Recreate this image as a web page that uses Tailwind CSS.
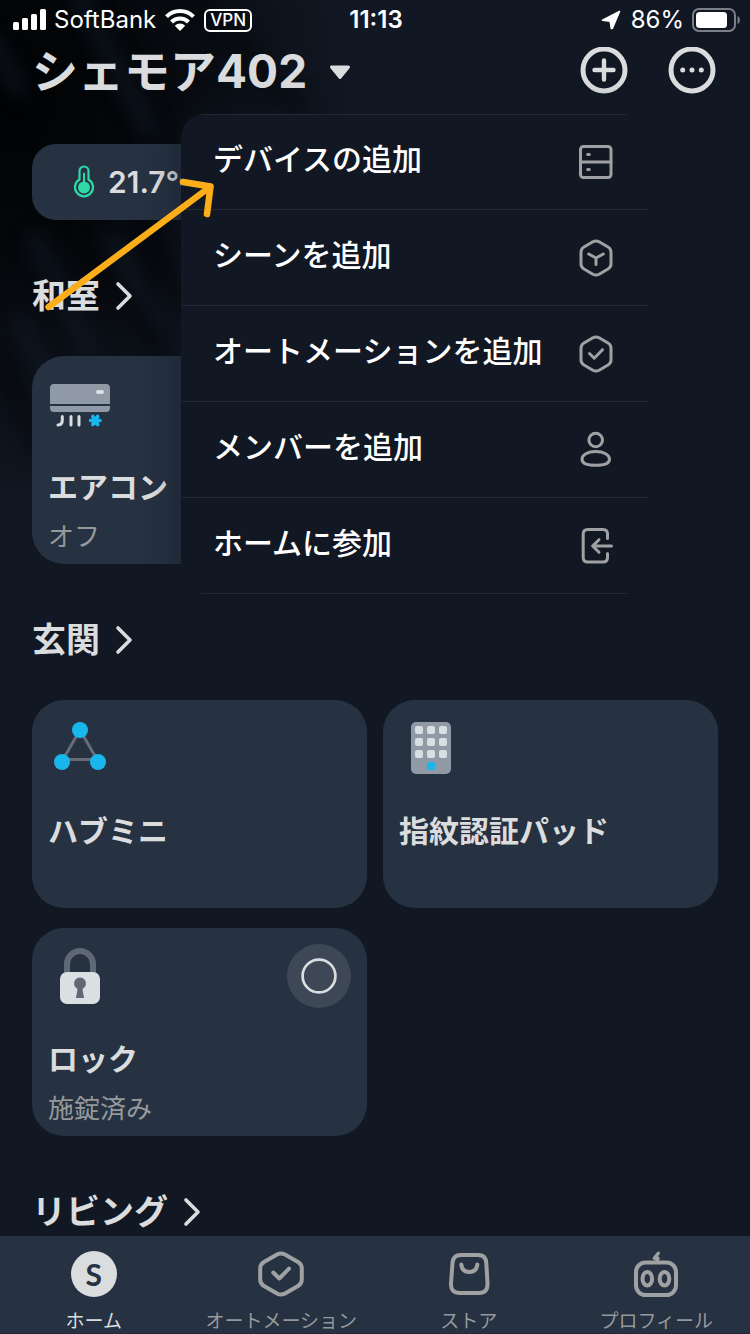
<!DOCTYPE html>
<html lang="ja">
<head>
<meta charset="utf-8">
<meta name="viewport" content="width=device-width, initial-scale=1">
<title>シェモア402</title>
<script src="https://cdn.jsdelivr.net/npm/@tailwindcss/browser@4"></script>
</head>
<body class="bg-[#111823] text-[#dadcde] font-['Inter','Noto_Sans_CJK_JP',sans-serif]">
<div class="relative isolate flex h-screen flex-col overflow-hidden">

  <!-- Shaded backdrop -->
  <svg class="absolute left-0 top-0 -z-10" width="600" height="560" viewBox="0 0 600 560" aria-hidden="true">
    <defs>
      <radialGradient id="shade" gradientUnits="userSpaceOnUse" cx="0" cy="0" r="1" gradientTransform="translate(10 100) scale(340 410)">
        <stop offset="0" stop-color="#010203"/>
        <stop offset="0.35" stop-color="#010203" stop-opacity="0.8"/>
        <stop offset="1" stop-color="#010203" stop-opacity="0"/>
      </radialGradient>
      <filter id="soft" filterUnits="userSpaceOnUse" x="-100" y="-100" width="800" height="760" color-interpolation-filters="sRGB"><feGaussianBlur stdDeviation="9"/></filter>
    </defs>
    <rect width="600" height="560" fill="url(#shade)"/>
    <g filter="url(#soft)" fill="none" stroke-linecap="round" stroke-width="16">
      <path stroke="#111a27" stroke-opacity="0.7" d="M-10 40 L20 90 M80 0 L150 130 M35 240 L90 350 M20 320 L60 400 M110 240 L160 330"/>
      <path stroke="#010203" stroke-opacity="0.5" d="M190 0 L300 110 M70 225 L160 345 M140 230 L200 330 M0 360 L40 450"/>
    </g>
  </svg>

  <!-- Status bar -->
  <div class="grid h-10 shrink-0 grid-cols-[1fr_auto_1fr] items-center pl-3 pr-2.5 text-[24px] leading-7 text-white">
    <div class="flex items-center">
      <svg width="36" height="24" viewBox="0 0 36 24" fill="#fff" aria-hidden="true"><rect x="1" y="14" width="6" height="8" rx="1.500"/><rect x="10" y="10" width="6" height="12" rx="1.500"/><rect x="19" y="6" width="6" height="16" rx="1.500"/><rect x="28" y="1" width="6" height="21" rx="1.500"/></svg>
      <span class="ml-1.5">SoftBank</span>
      <svg class="ml-2" width="32" height="24" viewBox="0 0 32 24" aria-hidden="true"><g fill="none" stroke="#fff" stroke-width="4"><path d="M2.500 8.600 A19 19 0 0 1 29.500 8.600"/><path d="M7.500 14 A12 12 0 0 1 24.500 14"/></g><path fill="#fff" d="M16 23 L10.800 17.700 A7.400 7.400 0 0 1 21.200 17.700Z"/></svg>
      <span class="ml-2 flex h-[23px] items-center rounded-md border-2 border-white px-1 text-[17px] leading-4 font-medium">VPN</span>
    </div>
    <div class="font-semibold">11:13</div>
    <div class="flex items-center justify-end">
      <svg width="20" height="20" viewBox="0 0 20 20" aria-hidden="true"><path fill="#fff" stroke="#fff" stroke-width="1.600" stroke-linejoin="round" d="M18.500 1.500 L1.500 10.300 L9.200 11.200 L10.300 18.500 L11.300 18.500Z"/></svg>
      <span class="ml-2.5">86%</span>
      <svg class="ml-2" width="48" height="24" viewBox="0 0 48 24" aria-hidden="true"><rect x="1" y="1" width="42" height="22" rx="6" fill="none" stroke="#7c8086" stroke-width="2"/><rect x="4" y="4" width="31" height="16" rx="3.500" fill="#fff"/><path fill="#7c8086" d="M45.500 8 Q48 9 48 12 T45.500 16Z"/></svg>
    </div>
  </div>

  <!-- Header -->
  <header class="relative z-10 flex h-[62px] shrink-0 items-center justify-between pl-8 pr-[34px]">
    <button type="button" class="flex items-center gap-[22px]">
      <h1 class="text-[46px] leading-[62px] font-bold">シェモア402</h1>
      <svg width="22" height="20" viewBox="0 0 22 20" aria-hidden="true"><path fill="#dadcde" stroke="#dadcde" stroke-width="3" stroke-linejoin="round" d="M2.500 6 H19.500 L11 16.500Z"/></svg>
    </button>
    <div class="flex gap-10">
      <button type="button" aria-label="追加"><svg width="48" height="48" viewBox="0 0 48 48" fill="none" stroke="#dadcde" aria-hidden="true"><circle cx="24" cy="23" r="21" stroke-width="5"/><path d="M14.500 23 H33.500 M24 13.500 V32.500" stroke-width="4.400" stroke-linecap="round"/></svg></button>
      <button type="button" aria-label="その他"><svg width="48" height="48" viewBox="0 0 48 48" fill="#dadcde" aria-hidden="true"><circle cx="24" cy="23" r="21" fill="none" stroke="#dadcde" stroke-width="5"/><circle cx="14.700" cy="23" r="2.500"/><circle cx="24" cy="23" r="2.500"/><circle cx="33.300" cy="23" r="2.500"/></svg></button>
    </div>

    <!-- Add menu -->
    <div role="menu" class="absolute right-[102px] top-[74px] w-[467px] overflow-hidden rounded-3xl bg-[#111823] text-[30px] leading-[34px] font-medium text-white shadow-[0_0_32px_rgba(17,24,35,0.6)]">
      <button type="button" role="menuitem" class="flex h-24 w-full items-start justify-between border-y border-[#212934] px-8 pt-[27px]">
        <span>デバイスの追加</span>
        <svg width="40" height="40" viewBox="0 0 40 40" fill="none" stroke="#9fa1a3" stroke-width="3" stroke-linecap="round" aria-hidden="true"><rect x="4.500" y="4.500" width="30.500" height="31" rx="3"/><path d="M4.500 20 H35 M11.700 12.500 H13.300 M11.700 27.500 H13.300"/></svg>
      </button>
      <button type="button" role="menuitem" class="flex h-24 w-full items-start justify-between border-b border-[#212934] px-8 pt-7">
        <span>シーンを追加</span>
        <svg width="40" height="40" viewBox="0 0 40 40" fill="none" stroke="#9fa1a3" stroke-width="3" stroke-linecap="round" stroke-linejoin="round" aria-hidden="true"><path d="M16.900 3.800 Q20 2.100 23.100 3.800 L32 9 Q35 10.800 35 14 V26 Q35 29.200 32 31 L23.100 36.200 Q20 37.900 16.900 36.200 L8 31 Q5 29.200 5 26 V14 Q5 10.800 8 9Z"/><path d="M12.700 16 L20 20 L27.300 16 M20 20 V26.500"/></svg>
      </button>
      <button type="button" role="menuitem" class="flex h-24 w-full items-start justify-between border-b border-[#212934] px-8 pt-7">
        <span>オートメーションを追加</span>
        <svg width="40" height="40" viewBox="0 0 40 40" fill="none" stroke="#9fa1a3" stroke-width="3" stroke-linecap="round" stroke-linejoin="round" aria-hidden="true"><path d="M16.900 3.800 Q20 2.100 23.100 3.800 L32 9 Q35 10.800 35 14 V26 Q35 29.200 32 31 L23.100 36.200 Q20 37.900 16.900 36.200 L8 31 Q5 29.200 5 26 V14 Q5 10.800 8 9Z"/><path d="M13.500 19.500 L18.200 24.200 L26.500 15.700"/></svg>
      </button>
      <button type="button" role="menuitem" class="flex h-24 w-full items-start justify-between border-b border-[#212934] px-8 pt-7">
        <span>メンバーを追加</span>
        <svg width="40" height="40" viewBox="0 0 40 40" fill="none" stroke="#9fa1a3" stroke-width="3" aria-hidden="true"><circle cx="19.700" cy="10" r="6.800"/><path d="M19.700 21.500 C28 21.500 33.500 25 33.500 29.200 C33.500 33.600 29 35.300 19.700 35.300 S6 33.600 6 29.200 C6 25 11.500 21.500 19.700 21.500Z"/></svg>
      </button>
      <button type="button" role="menuitem" class="flex h-24 w-full items-start justify-between border-b border-[#212934] px-8 pt-7">
        <span>ホームに参加</span>
        <svg width="40" height="40" viewBox="0 0 40 40" fill="none" stroke="#9fa1a3" stroke-width="3" stroke-linecap="round" stroke-linejoin="round" aria-hidden="true"><path d="M31.500 12.500 V8 Q31.500 3.500 27 3.500 H11.700 Q7.200 3.500 7.200 8 V31.500 Q7.200 36 11.700 36 H27 Q31.500 36 31.500 31.500 V27.500"/><path d="M35.500 20 H17 M23 13.700 L16.600 20 L23 26.300"/></svg>
      </button>
    </div>

    <!-- Pointer to the first menu entry -->
    <svg class="absolute left-10 top-[132px]" width="184" height="148" viewBox="0 0 184 148" fill="none" stroke="#fcae1a" stroke-width="6.500" stroke-linecap="round" stroke-linejoin="round" aria-hidden="true"><path d="M8.500 135 L170 15 M143 10 L170.500 14.500 L167 42"/></svg>
  </header>

  <!-- Rooms -->
  <main class="flex-1 overflow-hidden px-8 pt-[42px]">
    <div class="flex h-[76px] w-fit items-center gap-3 rounded-3xl bg-[#263141] px-10 text-[30px] leading-9 font-semibold">
      <svg width="24" height="36" viewBox="0 0 24 36" aria-hidden="true"><path fill="none" stroke="#2ed8a7" stroke-width="2.200" d="M7.500 15.500 V7 A4.500 4.500 0 0 1 16.500 7 V15.500 A9 9 0 1 1 7.500 15.500Z"/><circle cx="12" cy="23.500" r="6" fill="#2ed8a7"/><path stroke="#2ed8a7" stroke-width="2" stroke-linecap="round" d="M12 9.500 V20"/></svg>
      <span>21.7°C</span>
    </div>

    <section>
      <h2 class="mt-[52px] mb-9"><a href="#washitsu" class="flex h-12 w-fit items-center gap-3.5 text-[34px] leading-[48px] font-bold">和室
        <svg width="24" height="32" viewBox="0 0 24 32" fill="none" stroke="#dadcde" stroke-width="3.600" stroke-linecap="round" stroke-linejoin="round" aria-hidden="true"><path d="M4 4 L16 16 L4 28"/></svg></a></h2>
      <div class="grid grid-cols-2 gap-x-4 gap-y-5">
        <article class="min-h-52 rounded-4xl bg-[#263141] px-4 pt-4 pb-2">
          <svg width="64" height="64" viewBox="0 0 64 64" aria-hidden="true"><path fill="#8f9aa6" d="M6 12 H58 Q62 12 62 16 V32 H2 V16 Q2 12 6 12Z M2 34 H62 V36 Q62 40 58 40 H6 Q2 40 2 36Z"/><rect x="48" y="18" width="8" height="4" rx="2" fill="#dadfe2"/><path fill="none" stroke="#dadfe2" stroke-width="3" stroke-linecap="round" d="M14.300 44.500 V48 Q14.300 53 10 53 M23 44.500 V53 M31 44.500 V53"/><path stroke="#19b6ee" stroke-width="3.600" stroke-linecap="round" d="M42.500 48.500 H52 M44.800 44.500 L49.700 52.500 M49.700 44.500 L44.800 52.500"/></svg>
          <h3 class="mt-[33px] text-[30px] leading-9 font-bold">エアコン</h3>
          <p class="mt-4 text-[26px] leading-8 text-[#95999c]">オフ</p>
        </article>
      </div>
    </section>

    <section>
      <h2 class="mt-[52px] mb-9"><a href="#genkan" class="flex h-12 w-fit items-center gap-3.5 text-[34px] leading-[48px] font-bold">玄関
        <svg width="24" height="32" viewBox="0 0 24 32" fill="none" stroke="#dadcde" stroke-width="3.600" stroke-linecap="round" stroke-linejoin="round" aria-hidden="true"><path d="M4 4 L16 16 L4 28"/></svg></a></h2>
      <div class="grid grid-cols-2 gap-x-4 gap-y-5">
        <article class="min-h-52 rounded-4xl bg-[#263141] px-4 pt-4 pb-2">
          <svg width="64" height="64" viewBox="0 0 64 64" aria-hidden="true"><path fill="none" stroke="#666d78" stroke-width="3" d="M32 14 L15 43.500 H49Z"/><g fill="#19b6ee"><circle cx="32" cy="14" r="8"/><circle cx="14" cy="46" r="8"/><circle cx="50" cy="46" r="8"/></g></svg>
          <h3 class="mt-[33px] text-[30px] leading-9 font-bold">ハブミニ</h3>
        </article>
        <article class="min-h-52 rounded-4xl bg-[#263141] px-4 pt-4 pb-2">
          <svg width="64" height="64" viewBox="0 0 64 64" aria-hidden="true"><rect x="12" y="6" width="40" height="52" rx="5" fill="#8f9aa6"/><g fill="#dadfe2"><rect x="16" y="10" width="8" height="8" rx="2"/><rect x="28" y="10" width="8" height="8" rx="2"/><rect x="40" y="10" width="8" height="8" rx="2"/><rect x="16" y="22" width="8" height="8" rx="2"/><rect x="28" y="22" width="8" height="8" rx="2"/><rect x="40" y="22" width="8" height="8" rx="2"/><rect x="16" y="34" width="8" height="8" rx="2"/><rect x="28" y="34" width="8" height="8" rx="2"/><rect x="40" y="34" width="8" height="8" rx="2"/></g><rect x="28" y="46" width="8" height="8" rx="2" fill="#19b6ee"/></svg>
          <h3 class="mt-[33px] text-[30px] leading-9 font-bold">指紋認証パッド</h3>
        </article>
        <article class="min-h-52 rounded-4xl bg-[#263141] px-4 pt-4 pb-2">
          <div class="flex justify-between">
            <svg width="64" height="64" viewBox="0 0 64 64" aria-hidden="true"><path fill="none" stroke="#5f6874" stroke-width="6" d="M19 30 V20 A13 13 0 0 1 45 20 V30"/><rect x="12" y="28" width="40" height="32" rx="7" fill="#dadfe2"/><path fill="#5f6874" d="M29.500 45 A6 6 0 1 1 34.500 45 L36 54 H28Z"/></svg>
            <button type="button" aria-label="ロックを操作" class="flex size-16 items-center justify-center rounded-full bg-[#3e4755]"><svg width="36" height="36" viewBox="0 0 36 36" fill="none" stroke="#dadcde" stroke-width="2.700" aria-hidden="true"><circle cx="18" cy="18" r="16.400"/></svg></button>
          </div>
          <h3 class="mt-[33px] text-[30px] leading-9 font-bold">ロック</h3>
          <p class="mt-4 text-[26px] leading-8 text-[#95999c]">施錠済み</p>
        </article>
      </div>
    </section>

    <section>
      <h2 class="mt-[52px]"><a href="#living" class="flex h-12 w-fit items-center gap-3.5 text-[34px] leading-[48px] font-bold">リビング
        <svg width="24" height="32" viewBox="0 0 24 32" fill="none" stroke="#dadcde" stroke-width="3.600" stroke-linecap="round" stroke-linejoin="round" aria-hidden="true"><path d="M4 4 L16 16 L4 28"/></svg></a></h2>
    </section>
  </main>

  <!-- Tab bar -->
  <nav class="grid h-[98px] shrink-0 grid-cols-4 border-b border-[#2a2238] bg-[#263141] pt-3.5 text-[19px] leading-5 text-[#95999c]">
    <a href="#home" aria-current="page" class="flex flex-col items-center gap-3.5 text-[#dadcde]">
      <span class="flex size-12 items-center justify-center"><span class="flex size-[46px] items-center justify-center rounded-full bg-[#dadcde] font-['Lato',sans-serif] text-[30px] leading-none font-bold text-[#263141]">S</span></span>
      ホーム
    </a>
    <a href="#automation" class="flex flex-col items-center gap-3.5">
      <svg width="48" height="48" viewBox="0 0 48 48" fill="none" stroke="#9fa1a3" stroke-width="4" stroke-linecap="round" stroke-linejoin="round" aria-hidden="true"><path d="M20 4.600 Q24 2.400 28 4.600 L41 12 Q44.800 14.200 44.800 18.500 V29.500 Q44.800 33.800 41 36 L28 43.400 Q24 45.600 20 43.400 L7 36 Q3.200 33.800 3.200 29.500 V18.500 Q3.200 14.200 7 12Z"/><path d="M16.300 22.500 L22.300 28.500 L32 18.700"/></svg>
      オートメーション
    </a>
    <a href="#store" class="flex flex-col items-center gap-3.5">
      <svg width="48" height="48" viewBox="0 0 48 48" fill="none" stroke="#9fa1a3" stroke-width="4" stroke-linecap="round" stroke-linejoin="round" aria-hidden="true"><path d="M16 5 H33 Q41 5 41.300 13 L42.500 33.500 Q43 43 34 43 H15 Q5.500 43 6 33.500 L7.500 13 Q8 5 16 5Z"/><path d="M16.300 14.500 C16.800 19.500 20 22 24.300 22 S31.800 19.500 32.300 14.500"/></svg>
      ストア
    </a>
    <a href="#profile" class="flex flex-col items-center gap-3.5">
      <svg width="48" height="48" viewBox="0 0 48 48" fill="none" stroke="#9fa1a3" stroke-width="4" stroke-linecap="round" stroke-linejoin="round" aria-hidden="true"><rect x="4" y="12.500" width="40" height="32.500" rx="9.500"/><ellipse cx="15.300" cy="28.700" rx="4.800" ry="6.800"/><ellipse cx="32.500" cy="28.700" rx="4.800" ry="6.800"/><path stroke-width="3.400" d="M26.300 3.200 L22.300 8.200 H26 L25 11.500"/></svg>
      プロフィール
    </a>
  </nav>
</div>
</body>
</html>
